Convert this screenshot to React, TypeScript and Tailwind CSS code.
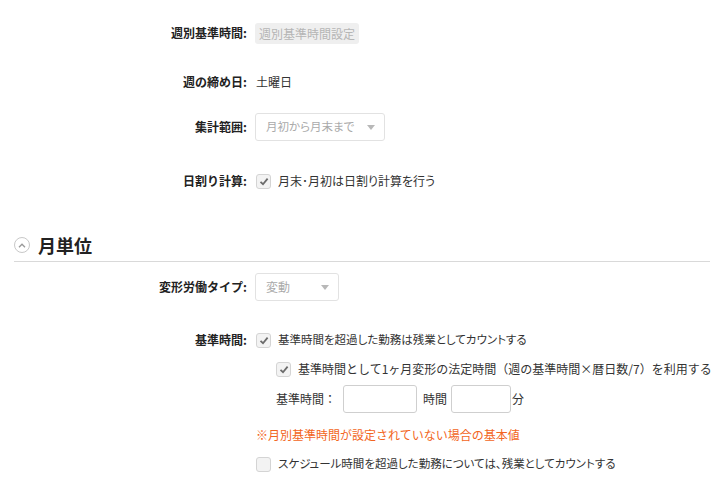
import React from "react";

const font = { fontFamily: '"Noto Sans CJK JP", "Noto Sans", sans-serif' };

function Checkbox({ checked }: { checked?: boolean }) {
  return (
    <span className="inline-flex h-[15px] w-[15px] shrink-0 items-center justify-center rounded-[3px] border border-[#d4d4d4] bg-[#f3f3f3]">
      {checked && (
        <svg width="10" height="9" viewBox="0 0 10 9">
          <path d="M1.5 4.8 L4 7.2 L8.6 1.6" fill="none" stroke="#6b6b6b" strokeWidth="1.8" />
        </svg>
      )}
    </span>
  );
}

function Caret() {
  return (
    <svg width="8" height="5" viewBox="0 0 8 5" className="ml-auto shrink-0">
      <path d="M0 0 L8 0 L4 5 Z" fill="#b8b8b8" />
    </svg>
  );
}

function Row({ label, className, children }: { label?: string; className?: string; children: React.ReactNode }) {
  return (
    <div className={`flex items-center ${className ?? ""}`}>
      <div className="w-[247px] shrink-0 text-right text-[12px] font-bold text-[#222]">{label}</div>
      <div className="ml-2 flex items-center gap-[7px] text-[12px] text-[#333] [font-feature-settings:'palt']">{children}</div>
    </div>
  );
}

export default function App() {
  return (
    <div className="h-[501px] w-[724px] overflow-hidden bg-white" style={font}>
      <Row label="週別基準時間:" className="mt-[22px] h-[22px]">
        <span className="rounded-[3px] bg-[#efefef] px-[4px] py-[2px] text-[12px] leading-[17px] text-[#b5b5b5] [font-feature-settings:normal]">
          週別基準時間設定
        </span>
      </Row>

      <Row label="週の締め日:" className="mt-[28px] h-[20px]">
        <span className="ml-px">土曜日</span>
      </Row>

      <Row label="集計範囲:" className="mt-[21px] h-[28px]">
        <div className="flex h-[28px] w-[130px] items-center rounded-[3px] border border-[#e2e2e2] pl-[10px] pr-[9px] text-[11.5px] text-[#aaa]">
          月初から月末まで
          <Caret />
        </div>
      </Row>

      <Row label="日割り計算:" className="mt-[30px] h-[20px]">
        <span className="ml-px"><Checkbox checked /></span>
        <span>月末･月初は日割り計算を行う</span>
      </Row>

      {/* 月単位 section */}
      <div className="mx-[14px] mt-[41px] flex items-center border-b border-[#d9d9d9] pb-[3px]">
        <span className="flex h-[16px] w-[16px] items-center justify-center rounded-full border border-[#c8c8c8]">
          <svg width="8" height="5" viewBox="0 0 8 5">
            <path d="M1 4.2 L4 1.2 L7 4.2" fill="none" stroke="#999" strokeWidth="1.3" />
          </svg>
        </span>
        <span className="ml-[8px] text-[18px] font-bold leading-[26px] text-[#222]">月単位</span>
      </div>

      <Row label="変形労働タイプ:" className="mt-[11px] h-[28px]">
        <div className="flex h-[28px] w-[84px] items-center rounded-[3px] border border-[#e2e2e2] pl-[10px] pr-[9px] text-[#aaa]">
          変動
          <Caret />
        </div>
      </Row>

      <Row label="基準時間:" className="mt-[29px] h-[20px]">
        <span className="ml-px"><Checkbox checked /></span>
        <span className="text-[11.5px]">基準時間を超過した勤務は残業としてカウントする</span>
      </Row>

      <div className="ml-[276px] mt-[9px] flex h-[20px] items-center gap-[7px] text-[12px] text-[#333]">
        <Checkbox checked />
        <span>基準時間として1ヶ月変形の法定時間（週の基準時間×暦日数/7）を利用する</span>
      </div>

      <div className="ml-[276px] mt-[6px] flex h-[28px] items-center text-[12px] text-[#333]">
        <span>基準時間：</span>
        <div className="ml-[7px] h-[28px] w-[74px] rounded-[3px] border border-[#cfcfcf]" />
        <span className="ml-[6px]">時間</span>
        <div className="ml-[4px] h-[28px] w-[60px] rounded-[3px] border border-[#cfcfcf]" />
        <span className="ml-px">分</span>
      </div>

      <div className="ml-[256px] mt-[13px] h-[18px] text-[12px] leading-[18px] text-[#f26522]">
        ※月別基準時間が設定されていない場合の基本値
      </div>

      <div className="ml-[256px] mt-[10px] flex h-[20px] items-center gap-[7px] text-[11.5px] text-[#333] [font-feature-settings:'palt']">
        <Checkbox />
        <span>スケジュール時間を超過した勤務については、残業としてカウントする</span>
      </div>
    </div>
  );
}
